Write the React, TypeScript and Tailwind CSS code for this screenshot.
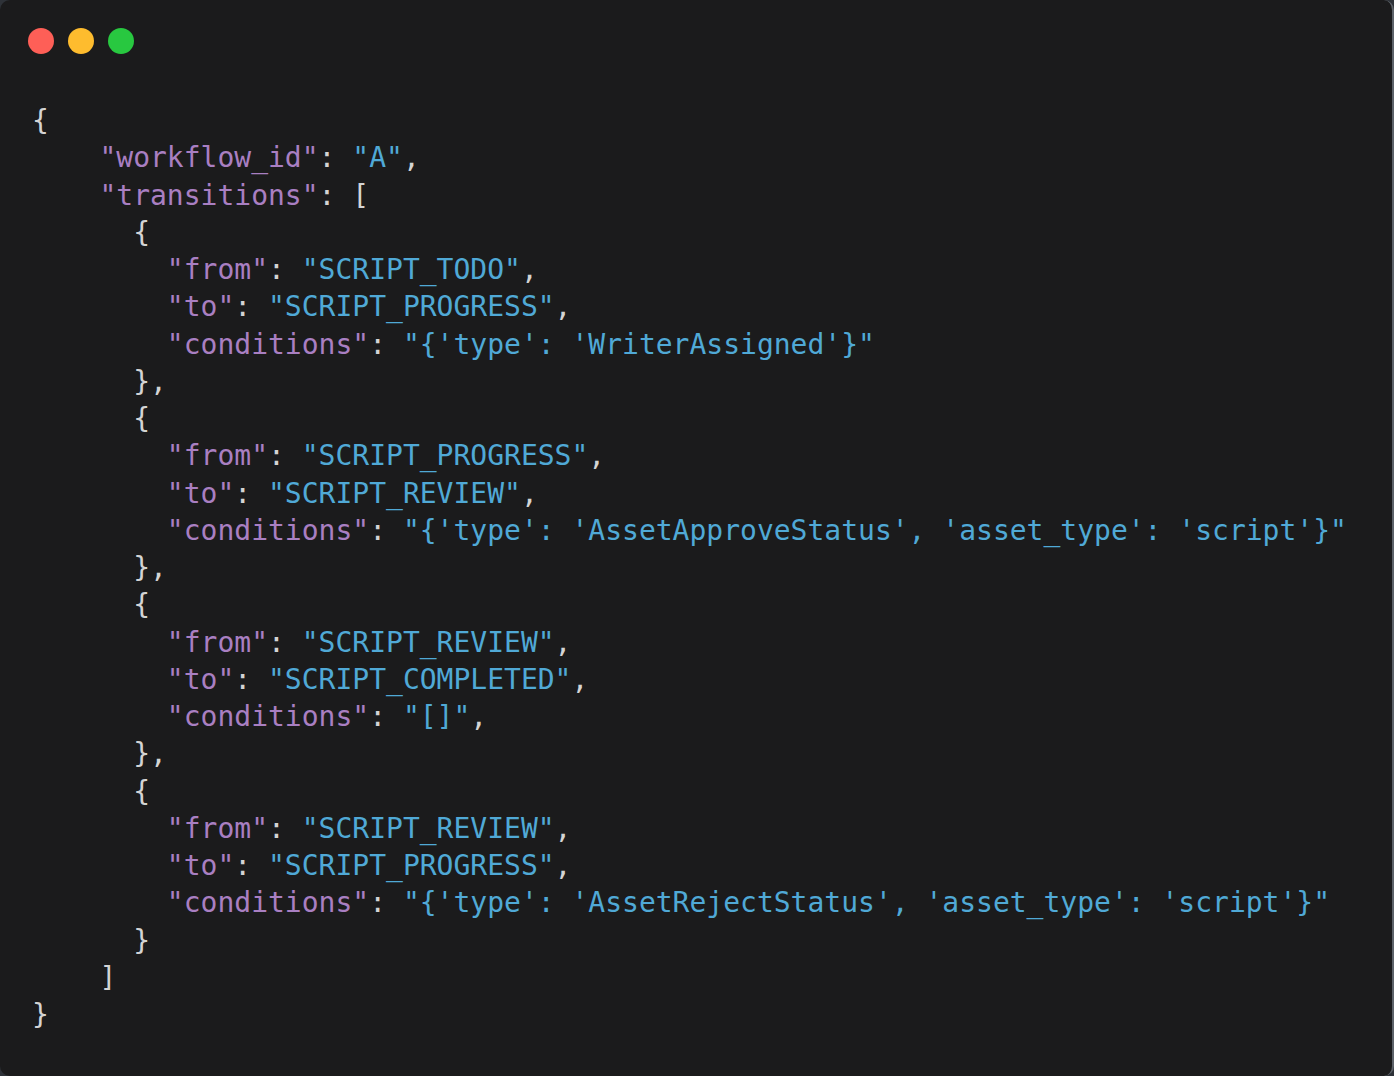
type Tok = { t: string; c: "k" | "s" | "p" };

const K = (t: string): Tok => ({ t, c: "k" });
const S = (t: string): Tok => ({ t, c: "s" });
const P = (t: string): Tok => ({ t, c: "p" });

const transitions = [
  { from: "SCRIPT_TODO", to: "SCRIPT_PROGRESS", cond: "{'type': 'WriterAssigned'}" },
  {
    from: "SCRIPT_PROGRESS",
    to: "SCRIPT_REVIEW",
    cond: "{'type': 'AssetApproveStatus', 'asset_type': 'script'}",
  },
  { from: "SCRIPT_REVIEW", to: "SCRIPT_COMPLETED", cond: "[]", trailing: true },
  {
    from: "SCRIPT_REVIEW",
    to: "SCRIPT_PROGRESS",
    cond: "{'type': 'AssetRejectStatus', 'asset_type': 'script'}",
  },
];

function buildLines(): { indent: number; toks: Tok[] }[] {
  const lines: { indent: number; toks: Tok[] }[] = [];
  lines.push({ indent: 0, toks: [P("{")] });
  lines.push({ indent: 4, toks: [K('"workflow_id"'), P(": "), S('"A"'), P(",")] });
  lines.push({ indent: 4, toks: [K('"transitions"'), P(": [")] });
  transitions.forEach((tr, i) => {
    lines.push({ indent: 6, toks: [P("{")] });
    lines.push({ indent: 8, toks: [K('"from"'), P(": "), S(`"${tr.from}"`), P(",")] });
    lines.push({ indent: 8, toks: [K('"to"'), P(": "), S(`"${tr.to}"`), P(",")] });
    const condToks: Tok[] = [K('"conditions"'), P(": "), S(`"${tr.cond}"`)];
    if (tr.trailing) condToks.push(P(","));
    lines.push({ indent: 8, toks: condToks });
    lines.push({ indent: 6, toks: [P(i < transitions.length - 1 ? "}," : "}")] });
  });
  lines.push({ indent: 4, toks: [P("]")] });
  lines.push({ indent: 0, toks: [P("}")] });
  return lines;
}

const colorClass = {
  k: "text-[#a97fc2]",
  s: "text-[#50a9d6]",
  p: "text-[#d4d4d4]",
};

export default function App() {
  const lines = buildLines();
  return (
    <div className="w-[1394px] h-[1076px] bg-[#2e3238] overflow-hidden">
      <div className="w-full h-full bg-[#1b1b1c] rounded-[10px] border-r-2 border-[#5d6269]">
        {/* Window controls */}
        <div className="flex gap-[14px] pl-[28px] pt-[28px]">
          <span className="w-[26px] h-[26px] rounded-full bg-[#fe5f57]" />
          <span className="w-[26px] h-[26px] rounded-full bg-[#febc2e]" />
          <span className="w-[26px] h-[26px] rounded-full bg-[#28c840]" />
        </div>

        {/* Code */}
        <pre
          className="mt-[48px] pl-[32px] text-[28px] leading-[37.25px] whitespace-pre"
          style={{ fontFamily: '"DejaVu Sans Mono", "Liberation Mono", monospace' }}
        >
          {lines.map((line, i) => (
            <div key={i}>
              {" ".repeat(line.indent)}
              {line.toks.map((tok, j) => (
                <span key={j} className={colorClass[tok.c]}>
                  {tok.t}
                </span>
              ))}
            </div>
          ))}
        </pre>
      </div>
    </div>
  );
}
